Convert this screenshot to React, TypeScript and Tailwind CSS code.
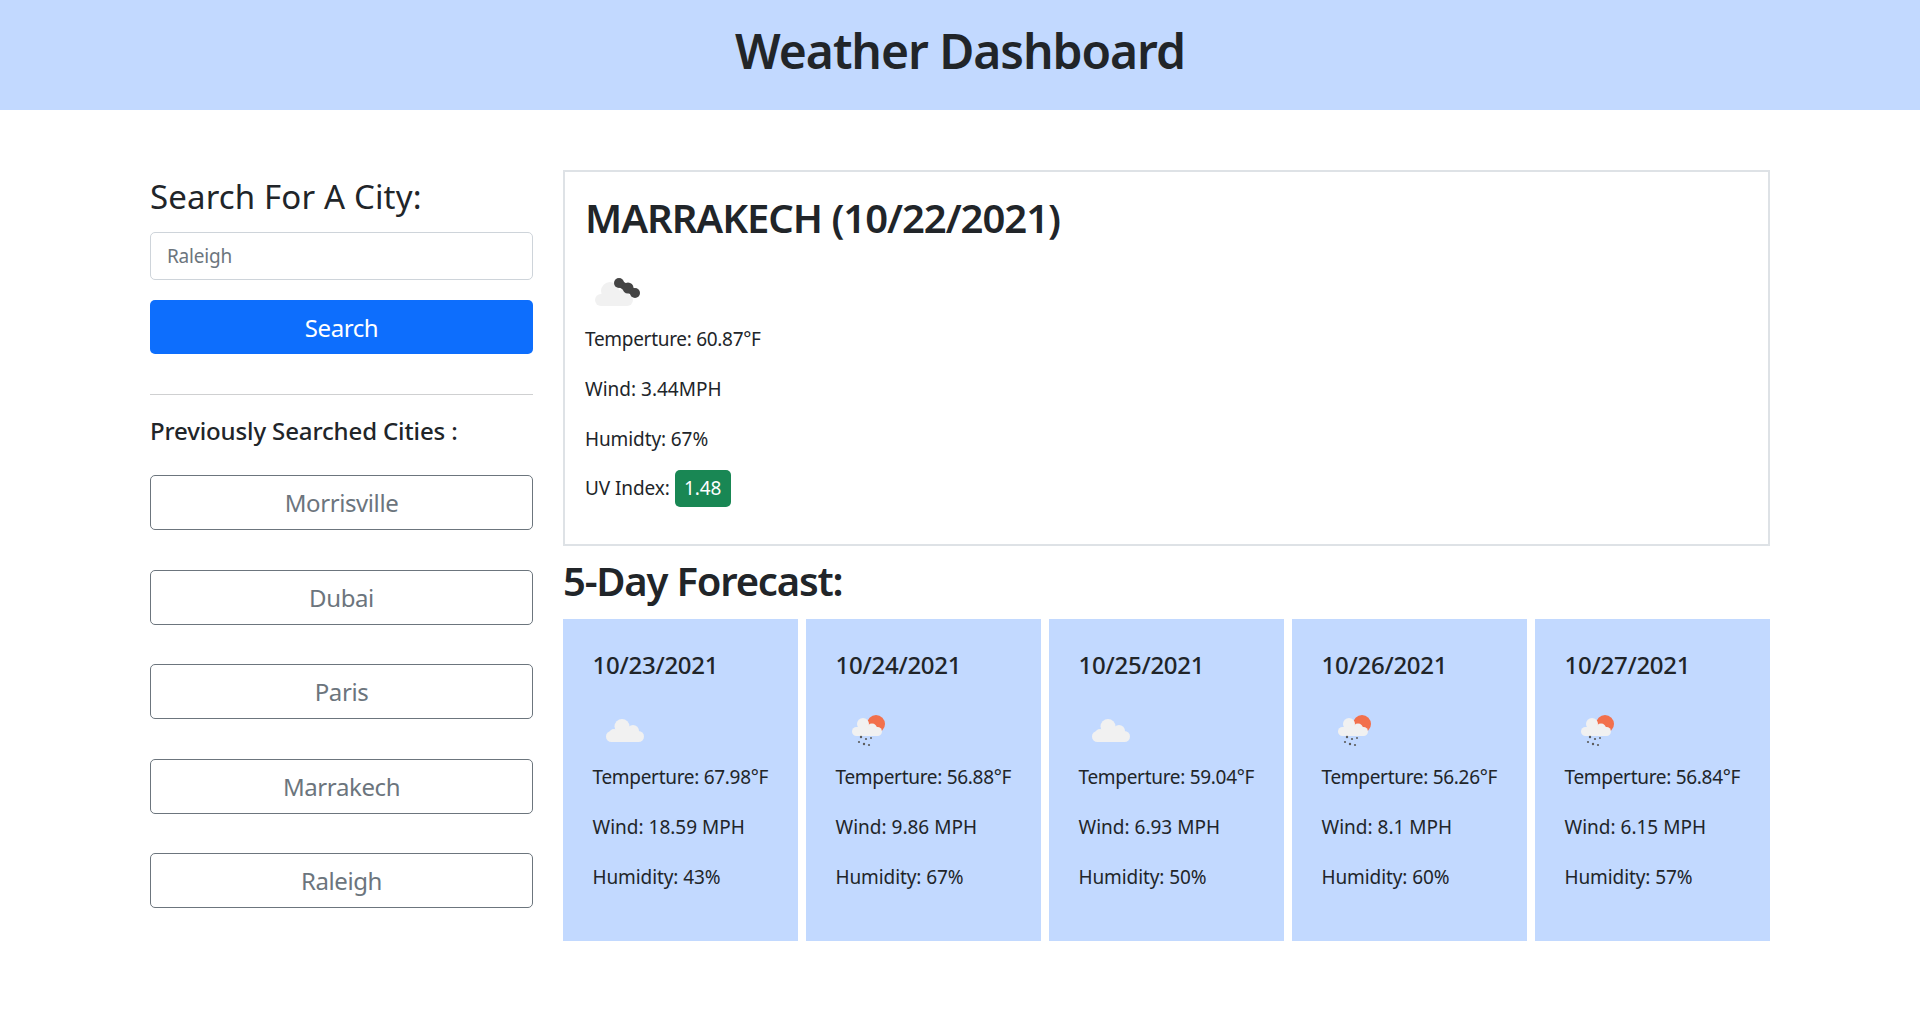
const font = { fontFamily: '"Noto Sans", sans-serif' };

const cities = ["Morrisville", "Dubai", "Paris", "Marrakech", "Raleigh"];

const forecast = [
  { date: "10/23/2021", icon: "cloud", temp: "67.98", wind: "18.59", humidity: "43" },
  { date: "10/24/2021", icon: "rain", temp: "56.88", wind: "9.86", humidity: "67" },
  { date: "10/25/2021", icon: "cloud", temp: "59.04", wind: "6.93", humidity: "50" },
  { date: "10/26/2021", icon: "rain", temp: "56.26", wind: "8.1", humidity: "60" },
  { date: "10/27/2021", icon: "rain", temp: "56.84", wind: "6.15", humidity: "57" },
];

function CloudIcon() {
  return (
    <svg width="60" height="60" viewBox="0 0 60 60" fill="#f1f1f1">
      <circle cx="29" cy="26.500" r="7.500" />
      <circle cx="40" cy="31" r="6" />
      <circle cx="21" cy="34" r="5" />
      <rect x="13" y="31" width="38" height="11" rx="5.500" />
    </svg>
  );
}

function RainIcon() {
  return (
    <svg width="60" height="60" viewBox="0 0 60 60">
      <circle cx="40" cy="24" r="9" fill="#f2704c" />
      <g fill="#f1f1f1">
        <circle cx="27" cy="24" r="6" />
        <circle cx="36" cy="28.500" r="5" />
        <rect x="16" y="27" width="30" height="9" rx="4.500" />
      </g>
      <g fill="#5c5c5c">
        <circle cx="25" cy="37" r="1.200" />
        <circle cx="30" cy="39" r="1.100" />
        <circle cx="35" cy="38" r="1" />
        <circle cx="23" cy="42" r="1.100" />
        <circle cx="28" cy="44" r="1.200" />
        <circle cx="33" cy="45" r="1.100" />
      </g>
    </svg>
  );
}

function BrokenCloudIcon() {
  return (
    <svg width="70" height="64" viewBox="0 0 70 64">
      <g fill="#f1f1f1">
        <circle cx="25" cy="31" r="9" />
        <circle cx="38" cy="35" r="6" />
        <rect x="10" y="34" width="38" height="12" rx="6" />
      </g>
      <path d="M34 23 L50 33" stroke="#444444" strokeWidth="7" />
      <g fill="#444444">
        <circle cx="34" cy="23" r="5" />
        <circle cx="43" cy="28" r="5.500" />
        <circle cx="50" cy="33" r="5" />
      </g>
    </svg>
  );
}

export default function App() {
  return (
    <div className="min-h-screen bg-white text-[#212529]" style={font}>
      <header className="h-[110px] bg-[#c2d9ff] flex justify-center pt-[19px]">
        <h1 className="text-[48px] leading-[64px] font-semibold tracking-[-1.05px]">Weather Dashboard</h1>
      </header>

      <div className="flex gap-[30px] pl-[150px] pt-[60px]">
        <aside className="w-[383px] flex flex-col">
          <h2 className="text-[33px] leading-[40px] mt-[7px] tracking-[0.15px]">Search For A City:</h2>
          <div className="h-[48px] mt-[15px] border border-[#ced4da] rounded-[5px] flex items-center px-4 text-[#6c757d] text-[19px] tracking-[-0.2px]">
            Raleigh
          </div>
          <button className="h-[54px] mt-5 pt-px bg-[#0d6efd] text-white rounded-[5px] text-[24px] tracking-[-0.4px]">Search</button>
          <div className="h-px bg-[#cfd0d1] mt-10" />
          <h3 className="text-[24px] leading-[29px] font-medium mt-[21px] tracking-[-0.13px]">Previously Searched Cities :</h3>
          <div className="flex flex-col gap-[39.5px] mt-[30px]">
            {cities.map((city) => (
              <button
                key={city}
                className="h-[55px] pt-px border border-[#6c757d] rounded-[5px] text-[#6c757d] text-[24px] tracking-[-0.4px]"
              >
                {city}
              </button>
            ))}
          </div>
        </aside>

        <main className="w-[1207px]">
          <section className="h-[376px] border-2 border-[#dee2e6] px-[20px] pt-[22px] text-[19px]">
            <h2 className="text-[40px] leading-[48px] font-semibold tracking-[-1.03px]">MARRAKECH (10/22/2021)</h2>
            <div className="mt-[18px] h-[64px] flex">
              <BrokenCloudIcon />
            </div>
            <p className="leading-[30px] tracking-[-0.3px]">Temperture: 60.87°F</p>
            <p className="mt-[20px] leading-[30px]">Wind: 3.44MPH</p>
            <p className="mt-[20px] leading-[30px] tracking-[-0.1px]">Humidty: 67%</p>
            <p className="mt-[16px] flex items-center gap-[5px] tracking-[-0.1px]">
              UV Index:
              <span className="bg-[#198754] text-white rounded-[5px] w-[56px] h-[37px] flex items-center justify-center">1.48</span>
            </p>
          </section>

          <h2 className="text-[40px] leading-[48px] font-semibold mt-[11px] tracking-[-1.2px]">5-Day Forecast:</h2>

          <div className="flex gap-2 mt-[14px]">
            {forecast.map((day) => (
              <div key={day.date} className="w-[235px] h-[322px] bg-[#c2d9ff] px-[29.5px] pt-[30px] text-[19px]">
                <h3 className="text-[24px] leading-[32px] font-medium tracking-[-0.25px]">{day.date}</h3>
                <div className="mt-[19px] h-[60px] flex">
                  {day.icon === "cloud" ? <CloudIcon /> : <RainIcon />}
                </div>
                <p className="mt-[2px] leading-[30px] tracking-[-0.3px]">Temperture: {day.temp}°F</p>
                <p className="mt-[20px] leading-[30px]">Wind: {day.wind} MPH</p>
                <p className="mt-[20px] leading-[30px] tracking-[-0.1px]">Humidity: {day.humidity}%</p>
              </div>
            ))}
          </div>
        </main>
      </div>
    </div>
  );
}
